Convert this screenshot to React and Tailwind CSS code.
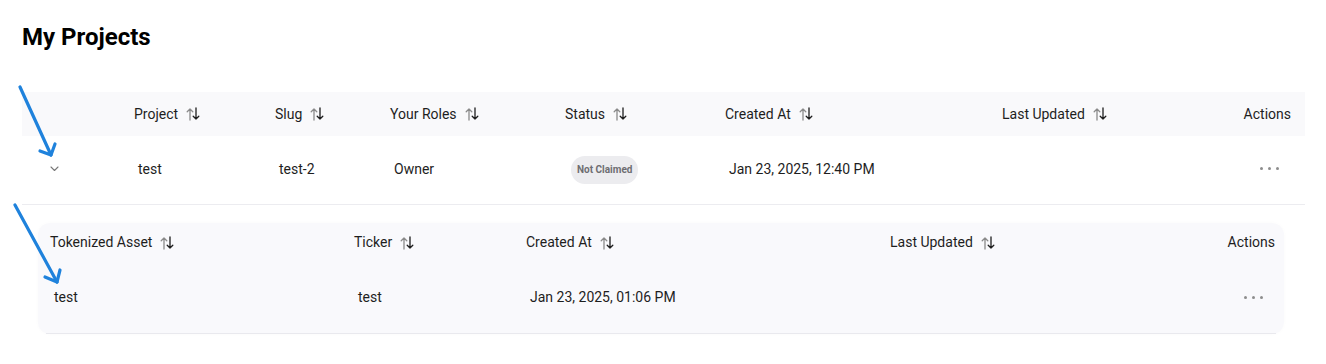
import React from 'react';

const SortIcon = () => (
    <svg width="14" height="14" viewBox="0 0 14 14" fill="none" className="ml-2 inline-block shrink-0">
        <path d="M4 13V2M1.2 4.8L4 2l2.8 2.8" stroke="#8a8a8a" strokeWidth="1.3" strokeLinecap="round" strokeLinejoin="round" />
        <path d="M10 1v11M7.2 9.2L10 12l2.8-2.8" stroke="#1e1e1e" strokeWidth="1.3" strokeLinecap="round" strokeLinejoin="round" />
    </svg>
);

const Dots = () => (
    <span className="flex justify-end items-center gap-[5px]">
        <span className="w-[3px] h-[3px] rounded-full bg-[#8d8d8d]" />
        <span className="w-[3px] h-[3px] rounded-full bg-[#8d8d8d]" />
        <span className="w-[3px] h-[3px] rounded-full bg-[#8d8d8d]" />
    </span>
);

const HeadCell = ({ label, sortable = true, className = '' }) => (
    <th className={`font-normal text-left p-0 pl-1 ${className}`}>
        <span className="inline-flex items-center">
            {label}
            {sortable && <SortIcon />}
        </span>
    </th>
);

const projectCols = [108, 141, 115, 175, 160, 277, 152, 155];
const assetCols = [304, 172, 364, 214, 176];

// annotation arrows drawn over the screenshot
const Arrows = () => (
    <svg className="absolute top-0 left-0 pointer-events-none" width="120" height="300" viewBox="0 0 120 300" fill="none">
        <g stroke="#1f82dc" strokeWidth="3.2" strokeLinecap="round" strokeLinejoin="round">
            <path d="M20 87L51 155" />
            <path d="M40 151L51 155L55 144" />
            <path d="M15 205L57 282" />
            <path d="M45 277L57 282L60 270" />
        </g>
    </svg>
);

export default function App() {
    return (
        <div className="relative min-h-[364px] bg-white px-[22px] pt-[21px] pb-4 text-[14px] text-[#1e1e1e]" style={{ fontFamily: 'Roboto, "Liberation Sans", sans-serif' }}>
            <h1 className="text-2xl font-bold leading-8 text-black">My Projects</h1>

            <table className="table-fixed mt-[39px] border-collapse" style={{ width: 1283 }}>
                <colgroup>
                    {projectCols.map((w, i) => (
                        <col key={i} style={{ width: w }} />
                    ))}
                </colgroup>
                <thead>
                    <tr className="h-[44px] bg-[#f9f9fb]">
                        <th className="p-0" />
                        <HeadCell label="Project" />
                        <HeadCell label="Slug" />
                        <HeadCell label="Your Roles" />
                        <HeadCell label="Status" />
                        <HeadCell label="Created At" />
                        <HeadCell label="Last Updated" />
                        <th className="font-normal text-right p-0 pr-[14px]">Actions</th>
                    </tr>
                </thead>
                <tbody>
                    <tr className="h-[68px] border-b border-[#ececf0]">
                        <td className="p-0 pl-[28px]">
                            <svg width="9" height="6" viewBox="0 0 9 6" fill="none" className="mt-[-2px]">
                                <path d="M1 1l3.5 3.5L8 1" stroke="#777" strokeWidth="1.1" strokeLinecap="round" strokeLinejoin="round" />
                            </svg>
                        </td>
                        <td className="p-0 pl-2">test</td>
                        <td className="p-0 pl-2">test-2</td>
                        <td className="p-0 pl-2">Owner</td>
                        <td className="p-0 pl-[10px]">
                            <span className="inline-flex items-center h-[28px] px-[6px] rounded-full bg-[#ececef] text-[10px] font-bold text-[#6e6e72]">
                                Not Claimed
                            </span>
                        </td>
                        <td className="p-0 pl-2">Jan 23, 2025, 12:40 PM</td>
                        <td className="p-0" />
                        <td className="p-0 pr-[26px] pb-[2px]">
                            <Dots />
                        </td>
                    </tr>
                    <tr>
                        <td colSpan={8} className="p-0 pl-4 pr-[21px] pt-[18px]">
                            <div className="rounded-xl bg-[#f9f9fc] px-2 shadow-[0_0_4px_rgba(0,0,0,0.02)]">
                                <table className="table-fixed w-full border-collapse">
                                    <colgroup>
                                        {assetCols.map((w, i) => (
                                            <col key={i} style={{ width: w }} />
                                        ))}
                                    </colgroup>
                                    <thead>
                                        <tr className="h-[40px]">
                                            <HeadCell label="Tokenized Asset" />
                                            <HeadCell label="Ticker" />
                                            <HeadCell label="Created At" />
                                            <HeadCell label="Last Updated" />
                                            <th className="font-normal text-right p-0 pr-[1px]">Actions</th>
                                        </tr>
                                    </thead>
                                    <tbody>
                                        <tr className="h-[71px] border-b border-[#e9e9ee]">
                                            <td className="p-0 pl-2">test</td>
                                            <td className="p-0 pl-2">test</td>
                                            <td className="p-0 pl-2">Jan 23, 2025, 01:06 PM</td>
                                            <td className="p-0" />
                                            <td className="p-0 pr-[13px]">
                                                <Dots />
                                            </td>
                                        </tr>
                                    </tbody>
                                </table>
                            </div>
                        </td>
                    </tr>
                </tbody>
            </table>

            <Arrows />
        </div>
    );
}
